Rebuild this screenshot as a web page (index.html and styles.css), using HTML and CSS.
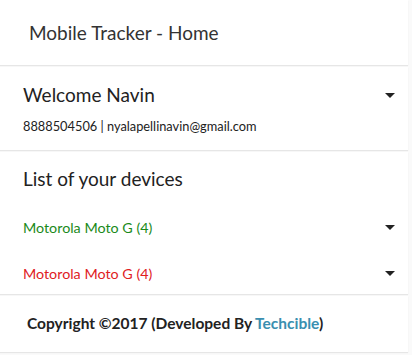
FILE: index.html
```html
<!DOCTYPE html>
<html>
<head>
<meta charset="utf-8">
<link rel="stylesheet" href="styles.css">
</head>
<body>
<div class="page">
  <header class="card header">Mobile Tracker - Home</header>
  <section class="card user">
    <div class="row">
      <h2 class="welcome">Welcome Navin</h2>
      <span class="caret"></span>
    </div>
    <div class="contact">8888504506 | nyalapellinavin@gmail.com</div>
  </section>
  <section class="card devices">
    <h2 class="list-title">List of your devices</h2>
    <div class="row device">
      <span class="dev online">Motorola Moto G (4)</span>
      <span class="caret"></span>
    </div>
    <div class="row device">
      <span class="dev offline">Motorola Moto G (4)</span>
      <span class="caret"></span>
    </div>
  </section>
  <footer class="card footer">Copyright ©2017 (Developed By <span class="brand">Techcible</span>)</footer>
</div>
</body>
</html>
```
FILE: styles.css
```css
html, body { margin: 0; padding: 0; }
body {
  background: #fafafa;
  font-family: Lato, "Open Sans", sans-serif;
  color: #222;
  width: 412px;
  height: 355px;
  overflow: hidden;
}
.page {
  width: 408px;
  display: flex;
  flex-direction: column;
  gap: 2px;
}
.card {
  background: #fff;
  box-shadow: 0 1px 1px rgba(0,0,0,0.08);
}
.header {
  height: 65px;
  box-sizing: border-box;
  padding: 21px 0 0 29px;
  font-size: 19px;
  color: #333;
}
.user {
  height: 83px;
  box-sizing: border-box;
  padding: 15px 13px 0 23px;
}
.row {
  display: flex;
  align-items: center;
  justify-content: space-between;
}
.welcome, .list-title {
  margin: 0;
  font-weight: normal;
  font-size: 19px;
  color: #222;
  line-height: 26px;
}
.contact {
  margin-top: 10px;
  font-size: 12.8px;
  color: #222;
}
.caret {
  width: 0; height: 0;
  border-left: 5px solid transparent;
  border-right: 5px solid transparent;
  border-top: 5px solid #222;
}
.devices {
  height: 142px;
  box-sizing: border-box;
  padding: 14px 13px 0 23px;
}
.device { margin-top: 27px; }
.device + .device { margin-top: 29px; }
.dev { font-size: 14.3px; }
.online { color: #1a8a1a; }
.offline { color: #e0201e; }
.footer {
  height: 56px;
  box-sizing: border-box;
  padding: 18px 0 0 27px;
  font-weight: bold;
  font-size: 15.5px;
  color: #222;
}
.brand { color: #3a8fb0; }
```
